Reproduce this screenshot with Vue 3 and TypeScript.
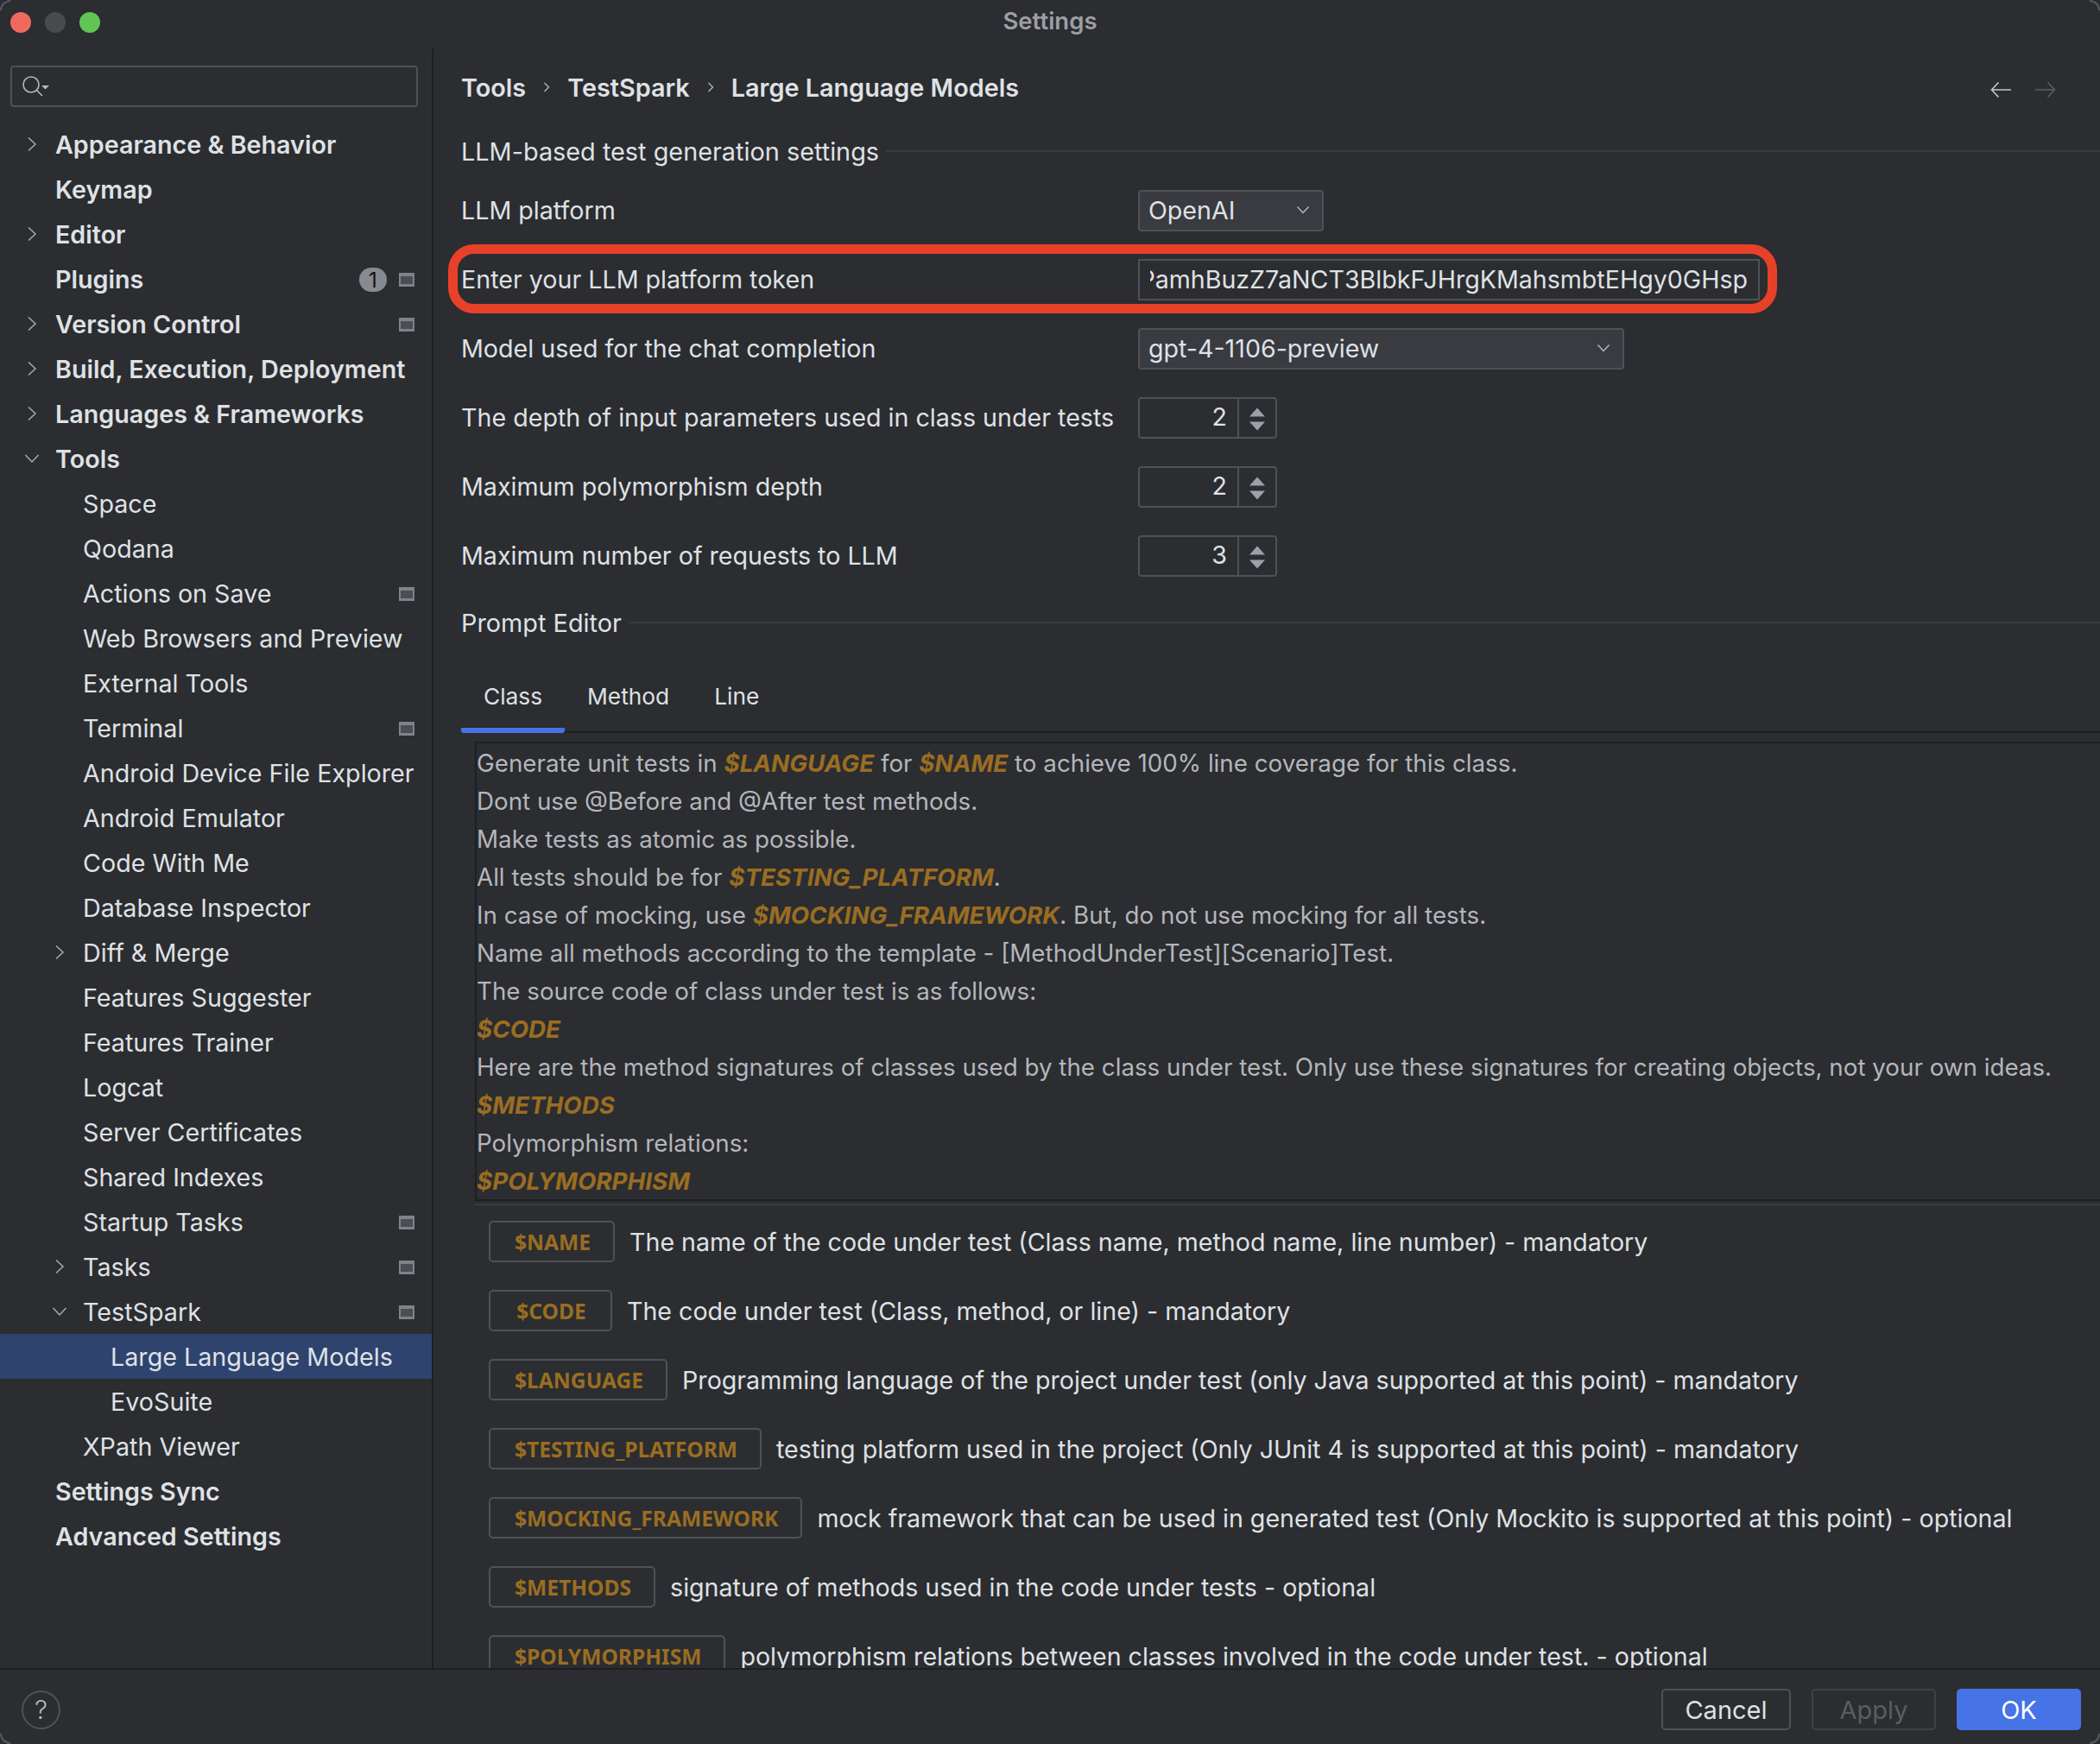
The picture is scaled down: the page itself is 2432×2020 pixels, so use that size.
<template>
  <div class="window">
    <span class="corner tl"></span>
    <span class="corner tr"></span>
    <span class="corner bl"></span>
    <span class="corner br"></span>
    <header class="titlebar">
      <div class="lights">
        <span class="light red"></span>
        <span class="light grey"></span>
        <span class="light green"></span>
      </div>
      <span class="title">Settings</span>
    </header>

    <div class="body">
      <aside class="sidebar">
        <div class="search">
          <svg width="34" height="26" viewBox="0 0 34 26" fill="none">
            <circle cx="10" cy="11" r="9" stroke="#b4b8bf" stroke-width="1.6" />
            <path d="M16.500 17.500l6.500 6.500" stroke="#b4b8bf" stroke-width="1.6" />
            <path d="M22 12h9l-4.500 4.500z" fill="#b4b8bf" />
          </svg>
        </div>
        <div class="tree">
          <div
            v-for="item in tree"
            :key="item.label"
            class="tree-row"
            :class="{ selected: item.selected, bold: item.level === 0 }"
          >
            <span class="tree-indent" :style="{ width: item.level * 32 + 'px' }"></span>
            <span class="tree-arrow">
              <svg v-if="item.arrow === 'right'" width="12" height="18" viewBox="0 0 12 18" fill="none">
                <path d="M2 1.500l8 7.500-8 7.500" stroke="#a8abb1" stroke-width="1.500" />
              </svg>
              <svg v-if="item.arrow === 'down'" width="18" height="12" viewBox="0 0 18 12" fill="none">
                <path d="M1.500 2l7.500 8 7.500-8" stroke="#a8abb1" stroke-width="1.500" />
              </svg>
            </span>
            <span class="tree-label">{{ item.label }}</span>
            <span v-if="item.badge" class="badge">{{ item.badge }}</span>
            <span v-if="item.project" class="project-icon"></span>
          </div>
        </div>
      </aside>

      <main class="main">
        <div class="crumbs">
          <span>Tools</span>
          <svg width="8" height="14" viewBox="0 0 8 14" fill="none"><path d="M1.500 2l5 5-5 5" stroke="#b4b6bc" stroke-width="1.3" /></svg>
          <span>TestSpark</span>
          <svg width="8" height="14" viewBox="0 0 8 14" fill="none"><path d="M1.500 2l5 5-5 5" stroke="#b4b6bc" stroke-width="1.3" /></svg>
          <span>Large Language Models</span>
          <span class="nav">
            <svg width="24" height="20" viewBox="0 0 24 20" fill="none"><path d="M24 10H1.500M9.500 1.500L1.500 10l8 8.500" stroke="#c4c6cb" stroke-width="1.6" /></svg>
            <svg width="24" height="20" viewBox="0 0 24 20" fill="none"><path d="M0 10h22.500M14.500 1.500l8 8.500-8 8.500" stroke="#5b5d61" stroke-width="1.6" /></svg>
          </span>
        </div>

        <div class="section-head first"><span>LLM-based test generation settings</span><i></i></div>

        <div class="form">
          <div class="form-row">
            <label>LLM platform</label>
            <div class="combo platform">
              <span>OpenAI</span>
              <svg width="16" height="10" viewBox="0 0 16 10" fill="none"><path d="M1.500 1.500L8 8.500l6.500-7" stroke="#b4b6bc" stroke-width="1.500" /></svg>
            </div>
          </div>
          <div class="form-row token-row">
            <label>Enter your LLM platform token</label>
            <div class="token"><div class="token-clip"><span>sk-aXc9PamhBuzZ7aNCT3BlbkFJHrgKMahsmbtEHgy0GHsp</span></div></div>
          </div>
          <div class="form-row">
            <label>Model used for the chat completion</label>
            <div class="combo model">
              <span>gpt-4-1106-preview</span>
              <svg width="16" height="10" viewBox="0 0 16 10" fill="none"><path d="M1.500 1.500L8 8.500l6.500-7" stroke="#b4b6bc" stroke-width="1.500" /></svg>
            </div>
          </div>
          <div v-for="s in spinners" :key="s.label" class="form-row">
            <label>{{ s.label }}</label>
            <div class="spinner">
              <span class="spin-value">{{ s.value }}</span>
              <span class="spin-arrows">
                <svg width="20" height="30" viewBox="0 0 20 30"><path d="M10 3.500l9 10H1zM1 19.500h18l-9 10z" fill="#9da0a8" /></svg>
              </span>
            </div>
          </div>
        </div>

        <div class="section-head second"><span>Prompt Editor</span><i></i></div>

        <div class="tabs">
          <span v-for="(t, i) in tabs" :key="t" class="tab" :class="{ active: i === 0 }">{{ t }}</span>
        </div>

        <div class="editor">
          <p>Generate unit tests in <b>$LANGUAGE</b> for <b>$NAME</b> to achieve 100% line coverage for this class.</p>
          <p>Dont use @Before and @After test methods.</p>
          <p>Make tests as atomic as possible.</p>
          <p>All tests should be for <b>$TESTING_PLATFORM</b>.</p>
          <p>In case of mocking, use <b>$MOCKING_FRAMEWORK</b>. But, do not use mocking for all tests.</p>
          <p>Name all methods according to the template - [MethodUnderTest][Scenario]Test.</p>
          <p>The source code of class under test is as follows:</p>
          <p><b>$CODE</b></p>
          <p>Here are the method signatures of classes used by the class under test. Only use these signatures for creating objects, not your own ideas.</p>
          <p><b>$METHODS</b></p>
          <p>Polymorphism relations:</p>
          <p><b>$POLYMORPHISM</b></p>
        </div>

        <div class="vars">
          <div v-for="v in vars" :key="v.name" class="var-row">
            <span class="chip">{{ v.name }}</span>
            <span class="var-text">{{ v.text }}</span>
          </div>
        </div>
      </main>
    </div>

    <footer class="footer">
      <span class="help">?</span>
      <div class="buttons">
        <button class="btn cancel">Cancel</button>
        <button class="btn apply">Apply</button>
        <button class="btn ok">OK</button>
      </div>
    </footer>
  </div>
</template>

<script setup lang="ts">
type TreeItem = {
  label: string
  level: number
  arrow?: 'right' | 'down'
  project?: boolean
  badge?: string
  selected?: boolean
}

const tree: TreeItem[] = [
  { label: 'Appearance & Behavior', level: 0, arrow: 'right' },
  { label: 'Keymap', level: 0 },
  { label: 'Editor', level: 0, arrow: 'right' },
  { label: 'Plugins', level: 0, badge: '1', project: true },
  { label: 'Version Control', level: 0, arrow: 'right', project: true },
  { label: 'Build, Execution, Deployment', level: 0, arrow: 'right' },
  { label: 'Languages & Frameworks', level: 0, arrow: 'right' },
  { label: 'Tools', level: 0, arrow: 'down' },
  { label: 'Space', level: 1 },
  { label: 'Qodana', level: 1 },
  { label: 'Actions on Save', level: 1, project: true },
  { label: 'Web Browsers and Preview', level: 1 },
  { label: 'External Tools', level: 1 },
  { label: 'Terminal', level: 1, project: true },
  { label: 'Android Device File Explorer', level: 1 },
  { label: 'Android Emulator', level: 1 },
  { label: 'Code With Me', level: 1 },
  { label: 'Database Inspector', level: 1 },
  { label: 'Diff & Merge', level: 1, arrow: 'right' },
  { label: 'Features Suggester', level: 1 },
  { label: 'Features Trainer', level: 1 },
  { label: 'Logcat', level: 1 },
  { label: 'Server Certificates', level: 1 },
  { label: 'Shared Indexes', level: 1 },
  { label: 'Startup Tasks', level: 1, project: true },
  { label: 'Tasks', level: 1, arrow: 'right', project: true },
  { label: 'TestSpark', level: 1, arrow: 'down', project: true },
  { label: 'Large Language Models', level: 2, selected: true },
  { label: 'EvoSuite', level: 2 },
  { label: 'XPath Viewer', level: 1 },
  { label: 'Settings Sync', level: 0 },
  { label: 'Advanced Settings', level: 0 },
]

const spinners = [
  { label: 'The depth of input parameters used in class under tests', value: 2 },
  { label: 'Maximum polymorphism depth', value: 2 },
  { label: 'Maximum number of requests to LLM', value: 3 },
]

const tabs = ['Class', 'Method', 'Line']

const vars = [
  { name: '$NAME', text: 'The name of the code under test (Class name, method name, line number) - mandatory' },
  { name: '$CODE', text: 'The code under test (Class, method, or line) - mandatory' },
  { name: '$LANGUAGE', text: 'Programming language of the project under test (only Java supported at this point) - mandatory' },
  { name: '$TESTING_PLATFORM', text: 'testing platform used in the project (Only JUnit 4 is supported at this point) - mandatory' },
  { name: '$MOCKING_FRAMEWORK', text: 'mock framework that can be used in generated test (Only Mockito is supported at this point) - optional' },
  { name: '$METHODS', text: 'signature of methods used in the code under tests - optional' },
  { name: '$POLYMORPHISM', text: 'polymorphism relations between classes involved in the code under test. - optional' },
]
</script>

<style>
html, body {
  background: #2b2d30;
}
</style>

<style scoped>
.window {
  width: 2432px;
  height: 2020px;
  display: flex;
  flex-direction: column;
  background: #2b2d30;
  color: #dfe1e5;
  font-family: Inter, "Liberation Sans", sans-serif;
  font-size: 28.6px;
  overflow: hidden;
  position: relative;
}

/* faint rounded window edge, only visible in the corners */
.corner {
  position: absolute;
  width: 12px;
  height: 12px;
  box-sizing: border-box;
  border: 0 solid #55585e;
}
.corner.tl { left: 0; top: 0; border-top-width: 2px; border-left-width: 2px; border-top-left-radius: 12px; }
.corner.tr { right: 0; top: 0; border-top-width: 2px; border-right-width: 2px; border-top-right-radius: 12px; }
.corner.bl { left: 0; bottom: 0; border-bottom-width: 2px; border-left-width: 2px; border-bottom-left-radius: 12px; }
.corner.br { right: 0; bottom: 0; border-bottom-width: 2px; border-right-width: 2px; border-bottom-right-radius: 12px; }

.titlebar {
  height: 56px;
  flex: none;
  display: flex;
  align-items: center;
  justify-content: center;
  position: relative;
  padding-bottom: 8px;
  box-sizing: border-box;
}

.lights {
  position: absolute;
  left: 12px;
  top: 14px;
  display: flex;
  gap: 16px;
}

.light {
  width: 24px;
  height: 24px;
  border-radius: 50%;
}
.light.red { background: #ee6a5f; }
.light.grey { background: #4a4b4d; }
.light.green { background: #61c554; }

.title {
  font-size: 27.5px;
  font-weight: 600;
  color: #9d9fa4;
}

.body {
  flex: 1;
  min-height: 0;
  display: flex;
}

.sidebar {
  width: 500px;
  flex: none;
  border-right: 2px solid #1e1f22;
  padding-top: 20px;
  box-sizing: content-box;
}

.search {
  width: 472px;
  height: 48px;
  margin-left: 12px;
  border: 2px solid #4e5157;
  border-radius: 4px;
  box-sizing: border-box;
  display: flex;
  align-items: center;
  padding-left: 12px;
}

.tree {
  margin-top: 17px;
}

.tree-row {
  height: 52px;
  display: flex;
  align-items: center;
  padding-right: 20px;
  font-size: 28.7px;
}

.tree-row.bold {
  font-weight: 600;
}

.tree-row.selected {
  background: #2e436e;
}

.tree-indent {
  flex: none;
}

.tree-arrow {
  width: 64px;
  flex: none;
  display: flex;
  justify-content: center;
  padding-left: 10px;
  box-sizing: border-box;
}

.tree-label {
  flex: 1;
  white-space: nowrap;
}

.badge {
  width: 32px;
  height: 28px;
  margin-top: 2px;
  border-radius: 14px;
  background: #868a91;
  color: #111;
  font-size: 24px;
  font-weight: 400;
  display: flex;
  align-items: center;
  justify-content: center;
  margin-right: 14px;
}

.project-icon {
  width: 18px;
  height: 16px;
  margin-top: 2px;
  box-sizing: border-box;
  border: 2px solid #7f8389;
  border-top-width: 4px;
  border-bottom-width: 3px;
  background: #4b4e53;
}

.main {
  flex: 1;
  min-width: 0;
  overflow: hidden;
  padding-left: 32px;
}

.crumbs {
  height: 60px;
  margin-top: 15px;
  display: flex;
  align-items: center;
  gap: 20px;
  font-weight: 600;
  font-size: 28.8px;
  position: relative;
}

.nav {
  position: absolute;
  left: 1771px;
  top: 23px;
  display: flex;
  gap: 28px;
}

.section-head {
  display: flex;
  align-items: center;
  gap: 8px;
  height: 40px;
  font-size: 28.85px;
}

.section-head i {
  flex: 1;
  height: 2px;
  background: #393b40;
}

.section-head.first {
  margin-top: 24px;
}

.section-head.second {
  margin-top: 33px;
}

.form {
  margin-top: 25px;
  display: flex;
  flex-direction: column;
  gap: 32px;
}

.form-row {
  height: 48px;
  display: flex;
  align-items: center;
  position: relative;
}

.form-row label {
  width: 784px;
  flex: none;
  white-space: nowrap;
  font-size: 28.65px;
  padding-bottom: 2px;
}

.token-row::before {
  content: "";
  position: absolute;
  left: -15px;
  top: -17px;
  width: 1539px;
  height: 80px;
  border: 11px solid #e8412a;
  border-radius: 30px;
  box-sizing: border-box;
}

.combo {
  height: 48px;
  box-sizing: border-box;
  border: 2px solid #4e5157;
  border-radius: 4px;
  background: #393b40;
  display: flex;
  align-items: center;
  justify-content: space-between;
  padding: 0 14px 2px 10px;
}

.combo.platform { width: 215px; }
.combo.model { width: 563px; }

.token {
  width: 720px;
  height: 48px;
  box-sizing: border-box;
  border: 2px solid #4e5157;
  padding: 0 12px 2px;
  display: flex;
  align-items: center;
}

.token-clip {
  flex: 1;
  min-width: 0;
  display: flex;
  justify-content: flex-end;
  overflow: hidden;
  white-space: nowrap;
}

.token-clip span {
  flex: none;
}

.spinner {
  width: 161px;
  height: 48px;
  box-sizing: border-box;
  border: 2px solid #4e5157;
  border-radius: 4px;
  display: flex;
  align-items: center;
}

.spin-value {
  width: 115px;
  height: 100%;
  flex: none;
  box-sizing: border-box;
  border-right: 2px solid #4e5157;
  text-align: right;
  padding-right: 12px;
  line-height: 42px;
}

.spin-arrows {
  flex: 1;
  display: flex;
  justify-content: center;
}

.tabs {
  margin-top: 26px;
  height: 82px;
  display: flex;
  border-bottom: 2px solid #1e1f22;
  box-sizing: border-box;
}

.tab {
  padding: 0 26px;
  height: 82px;
  line-height: 80px;
  box-sizing: border-box;
  font-size: 26.3px;
}

.tab.active {
  border-bottom: 6px solid #4673e6;
  border-radius: 3px;
}

.editor {
  margin: 10px 0 0 16px;
  border: 2px solid #1e1f22;
  border-right: none;
  height: 532px;
  padding-top: 1px;
  box-sizing: border-box;
  color: #b4b6bc;
  font-size: 27.75px;
}

.editor p {
  margin: 0;
  height: 44px;
  line-height: 44px;
  white-space: nowrap;
}

.editor b {
  color: #9a6d22;
  font-style: italic;
  font-weight: 700;
}

.vars {
  margin: 3px 0 0 16px;
  border-top: 2px solid #393b40;
  padding: 18px 0 0 16px;
  display: flex;
  flex-direction: column;
  gap: 32px;
}

.var-row {
  height: 48px;
  flex: none;
  display: flex;
  align-items: center;
  gap: 17px;
}

.chip {
  height: 48px;
  min-width: 143px;
  padding: 0 26px 0 28px;
  box-sizing: border-box;
  border: 2px solid #4e5157;
  border-radius: 5px;
  color: #9a6d22;
  font-family: "Noto Sans", sans-serif;
  font-weight: 700;
  font-size: 24.6px;
  display: flex;
  align-items: center;
  justify-content: center;
}

.var-text {
  white-space: nowrap;
}

.footer {
  height: 88px;
  flex: none;
  border-top: 2px solid #1e1f22;
  box-sizing: border-box;
  display: flex;
  align-items: center;
  justify-content: space-between;
  padding: 6px 22px 0 25px;
}

.help {
  width: 45px;
  height: 45px;
  box-sizing: border-box;
  border: 2px solid #4e5157;
  border-radius: 50%;
  display: flex;
  align-items: center;
  justify-content: center;
  color: #b4b6bc;
  font-size: 30px;
  font-weight: 300;
}

.buttons {
  display: flex;
  gap: 24px;
}

.btn {
  height: 48px;
  box-sizing: border-box;
  border-radius: 5px;
  font-family: inherit;
  font-size: 29px;
  background: transparent;
  padding: 0;
}

.btn.cancel {
  width: 150px;
  border: 2px solid #4e5157;
  color: #dfe1e5;
}

.btn.apply {
  width: 144px;
  border: 2px solid #3f4146;
  color: #5a5d63;
}

.btn.ok {
  width: 144px;
  border: none;
  background: #4673e6;
  color: #fff;
}
</style>
